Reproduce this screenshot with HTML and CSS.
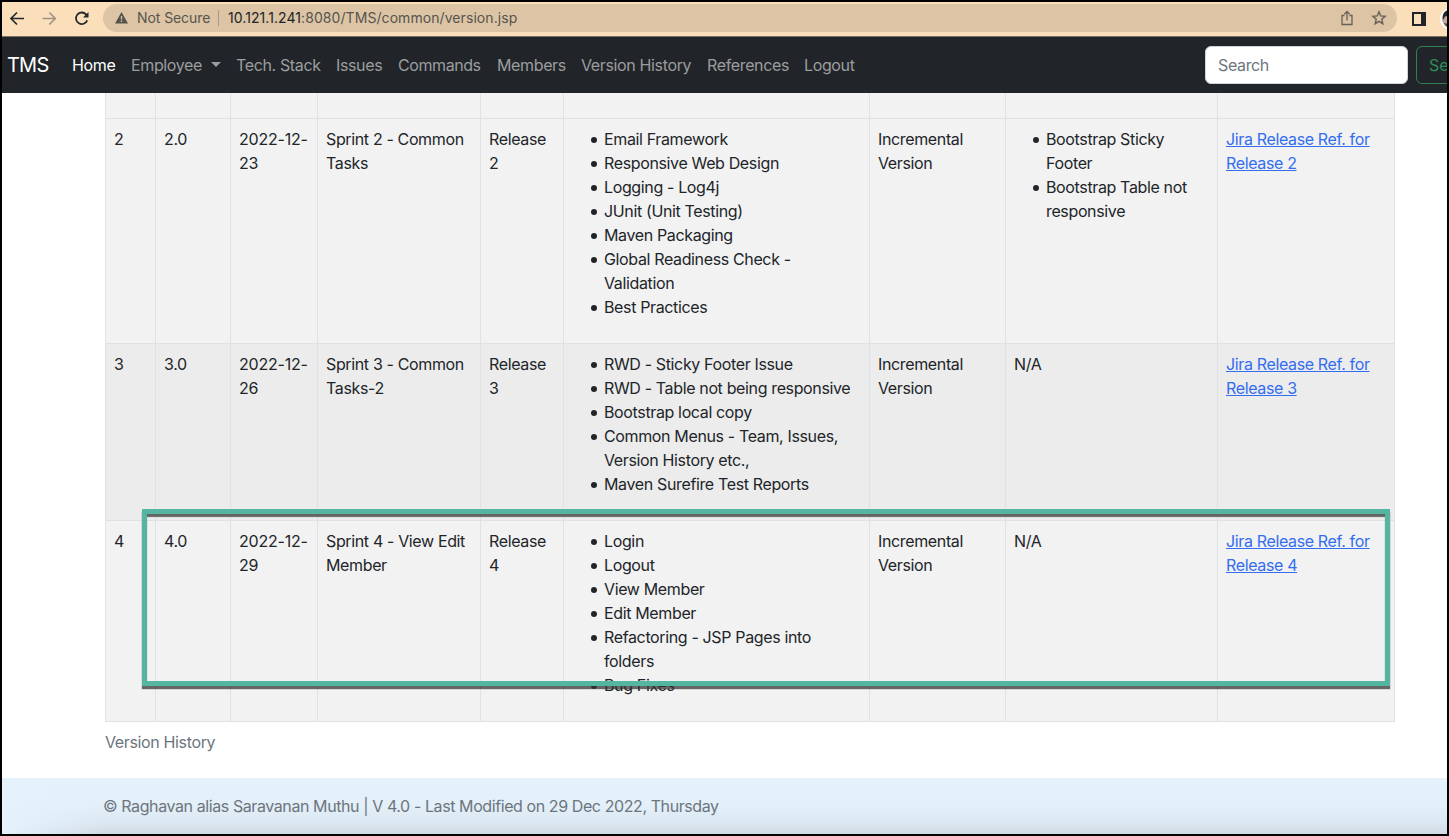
FILE: index.html
```html
<!DOCTYPE html>
<html lang="en">
<head>
<meta charset="utf-8">
<title>TMS - Version History</title>
<link rel="stylesheet" href="styles.css">
</head>
<body>
<div class="window">
  <header class="toolbar">
    <svg class="back" width="16" height="16" viewBox="0 0 16 16" fill="none" stroke="#25282b" stroke-width="1.7"><path d="M15 7.500H2.500M8 1.500 2 7.500l6 6"/></svg>
    <svg class="forward" width="16" height="16" viewBox="0 0 16 16" fill="none" stroke="#9d9384" stroke-width="1.7"><path d="M1.500 7.500H14M8.300 1.500l6 6-6 6"/></svg>
    <svg class="reload" width="16" height="16" viewBox="0 0 16 16"><path d="M13.200 9.400A5.800 5.800 0 1 1 12 3.300L13.600 5" fill="none" stroke="#25282b" stroke-width="1.8"/><path d="M14.500 1V6.500H9z" fill="#25282b"/></svg>
    <div class="address">
      <svg class="warn" width="13" height="12" viewBox="0 0 13 12"><path d="M6.5 0 13 11.5H0z" fill="#57544f"/><path d="M6.5 4v3.6M6.5 8.6V10" stroke="#dcc4a4" stroke-width="1.3"/></svg>
      <span class="insecure">Not Secure</span>
      <span class="divider"></span>
      <span class="url"><b>10.121.1.241</b>:8080/TMS/common/version.jsp</span>
      <svg class="share" width="14" height="16" viewBox="0 0 14 16" fill="none" stroke="#686058" stroke-width="1.3"><path d="M4.5 5.5H2v9h10v-9H9.500M7 10.500V1.700M4.300 4.200 7 1.500l2.700 2.700"/></svg>
      <svg class="star" width="16" height="16" viewBox="0 0 16 16" fill="none" stroke="#686058" stroke-width="1.400"><path d="m8 1.800 1.700 4.100 4.500.4-3.400 2.900 1 4.500L8 11.300l-3.800 2.400 1-4.500-3.400-2.900 4.500-.4z"/></svg>
    </div>
    <svg class="panel" width="14" height="14" viewBox="0 0 14 14"><path d="M0 0h14v14H0z" fill="#202327"/><path d="M2 2h7v10H2z" fill="#fbdfba"/></svg>
    <svg class="avatar" width="22" height="22" viewBox="0 0 22 22"><circle cx="11" cy="11" r="11" fill="#fff"/><circle cx="11" cy="11" r="9" fill="#c5a8a0"/><path d="M3 12C2 6 4 1.500 11 2v5L5 8.500z" fill="#25262a"/><path d="M4 15q4 0 7 5-5 0-7-5z" fill="#574743"/></svg>
  </header>
  <nav class="navbar">
    <a class="brand">TMS</a>
    <a class="item active">Home</a>
    <a class="item employee">Employee<i class="caret"></i></a>
    <a class="item tech">Tech. Stack</a>
    <a class="item issues">Issues</a>
    <a class="item commands">Commands</a>
    <a class="item members">Members</a>
    <a class="item history">Version History</a>
    <a class="item references">References</a>
    <a class="item logout">Logout</a>
    <input class="search" placeholder="Search">
    <button class="submit">Search</button>
  </nav>
  <main class="content">
    <div class="table-area">
      <table>
        <colgroup><col class="c1"><col class="c2"><col class="c3"><col class="c4"><col class="c5"><col class="c6"><col class="c7"><col class="c8"><col class="c9"></colgroup>
        <tbody>
          <tr class="stub"><td></td><td></td><td></td><td></td><td></td><td></td><td></td><td></td><td></td></tr>
          <tr>
            <td>2</td><td>2.0</td><td class="date">2022-12-<br>23</td><td>Sprint 2 - Common<br>Tasks</td><td>Release<br>2</td>
            <td><ul><li>Email Framework</li><li>Responsive Web Design</li><li>Logging - Log4j</li><li>JUnit (Unit Testing)</li><li>Maven Packaging</li><li>Global Readiness Check -<br>Validation</li><li>Best Practices</li></ul></td>
            <td>Incremental<br>Version</td>
            <td><ul><li>Bootstrap Sticky<br>Footer</li><li>Bootstrap Table not<br>responsive</li></ul></td>
            <td><a>Jira Release Ref. for<br>Release 2</a></td>
          </tr>
          <tr class="shaded">
            <td>3</td><td>3.0</td><td class="date">2022-12-<br>26</td><td>Sprint 3 - Common<br>Tasks-2</td><td>Release<br>3</td>
            <td><ul><li>RWD - Sticky Footer Issue</li><li>RWD - Table not being responsive</li><li>Bootstrap local copy</li><li>Common Menus - Team, Issues,<br>Version History etc.,</li><li>Maven Surefire Test Reports</li></ul></td>
            <td>Incremental<br>Version</td><td>N/A</td>
            <td><a>Jira Release Ref. for<br>Release 3</a></td>
          </tr>
          <tr>
            <td>4</td><td>4.0</td><td class="date">2022-12-<br>29</td><td>Sprint 4 - View Edit<br>Member</td><td>Release<br>4</td>
            <td><ul><li>Login</li><li>Logout</li><li>View Member</li><li>Edit Member</li><li>Refactoring - JSP Pages into<br>folders</li><li>Bug Fixes</li></ul></td>
            <td>Incremental<br>Version</td><td>N/A</td>
            <td><a>Jira Release Ref. for<br>Release 4</a></td>
          </tr>
        </tbody>
      </table>
      <div class="highlight"></div>
    </div>
    <p class="caption">Version History</p>
  </main>
  <footer class="footer">© Raghavan alias Saravanan Muthu | V 4.0 - Last Modified on 29 Dec 2022, Thursday</footer>
</div>
</body>
</html>
```
FILE: styles.css
```css
* { box-sizing: border-box; }
body { margin: 0; background: #000; color: #212529; font: 16px/24px Inter, sans-serif; letter-spacing: -0.36px; overflow: hidden; }
.window { width: 1449px; height: 836px; border: 2px solid #000; background: #fff; overflow: hidden; display: flex; flex-direction: column; }
.toolbar { height: 35px; flex: none; background: #fbdfba; border-bottom: 1px solid #7d7360; display: flex; align-items: center; padding-left: 7px; }
.toolbar svg { flex: none; }
.forward { margin-left: 16px; }
.reload { margin-left: 17px; }
.address { width: 1294px; flex: none; height: 28px; margin-left: 13px; border-radius: 14px; background: #dcc4a4; display: flex; align-items: center; padding: 0 10px 0 12px; font-size: 14px; letter-spacing: 0; color: #57544f; margin-bottom: 2px; }
.insecure { margin-left: 9px; width: 81px; letter-spacing: -0.08px; white-space: nowrap; }
.divider { width: 1px; height: 16px; background: #a79a88; }
.url { margin-left: 9px; letter-spacing: 0.07px; }
.url b { font-weight: 400; color: #202327; }
.share { margin-left: auto; }
.star { margin-left: 17px; }
.panel { margin-left: 15px; }
.avatar { margin-left: 14px; }
.navbar { height: 56px; flex: none; background: #212529; display: flex; align-items: center; padding-left: 5px; white-space: nowrap; }
.brand { width: 65px; color: #fff; font-size: 20px; letter-spacing: -0.8px; flex: none; }
.item { color: #9b9d9f; flex: none; }
.active { width: 59px; color: #fff; }
.employee { width: 105px; }
.caret { display: inline-block; margin-left: 9px; vertical-align: 4px; border: 5px solid transparent; border-top-color: #9b9d9f; border-bottom: 0; }
.tech { width: 100px; }
.issues { width: 62px; }
.commands { width: 99px; letter-spacing: -0.42px; }
.members { width: 84px; }
.history { width: 126px; }
.references { width: 97px; }
.search { margin-left: auto; flex: none; width: 203px; height: 38px; border: 1px solid #ced4da; border-radius: 6px; padding: 6px 12px; font: inherit; letter-spacing: inherit; }
.search::placeholder { color: #6c757d; opacity: 1; }
.submit { flex: none; width: 78px; height: 38px; margin: 0 -47px 0 8px; padding: 0 12px; border: 1px solid #2f8151; border-radius: 6px; background: none; color: #2f8c58; font: inherit; text-align: left; }
.content { padding-left: 103px; height: 685px; flex: none; }
.table-area { position: relative; width: 1290px; }
table { width: 1290px; table-layout: fixed; border-collapse: separate; border-spacing: 0; border: solid #dee2e6; border-width: 0 1px 1px 0; }
.c1 { width: 50px; } .c2 { width: 75px; } .c3 { width: 87px; }
.c4 { width: 163px; } .c5 { width: 83px; } .c6 { width: 306px; }
.c7 { width: 136px; } .c8 { width: 212px; } .c9 { width: 177px; }
td { padding: 8px 0 8px 8px; vertical-align: top; white-space: nowrap; background: #f2f2f2; border: solid #dee2e6; border-width: 1px 0 0 1px; }
.date { letter-spacing: -0.22px; }
.stub td { height: 25px; padding: 0; border-top: 0; }
.shaded td { background: #ececec; }
ul { margin: 0 0 16px; padding-left: 32px; list-style: none; }
li::before { content: ""; float: left; width: 6px; height: 6px; margin: 10px 0 0 -13px; border-radius: 50%; background: #212529; }
td a { color: #336df0; text-decoration: underline; }
.highlight { position: absolute; left: 37px; top: 416px; width: 1248px; height: 177px; border: 5px solid #54b5a0; box-shadow: 0 3px 1px #333b, inset 0 3px 1px #333b; }
.caption { margin: 0; padding-top: 8px; color: #6c757d; }
.footer { flex: 1; padding: 16px 0 0 101px; color: #6c757d; letter-spacing: -0.41px; background: linear-gradient(90deg, #e5f2fc 0, #e5f2fc00 100px), linear-gradient(#e5f2fc 0, #e3eff9 50%, #dce8f1 80%, #d0dbe4 100%); }
```
